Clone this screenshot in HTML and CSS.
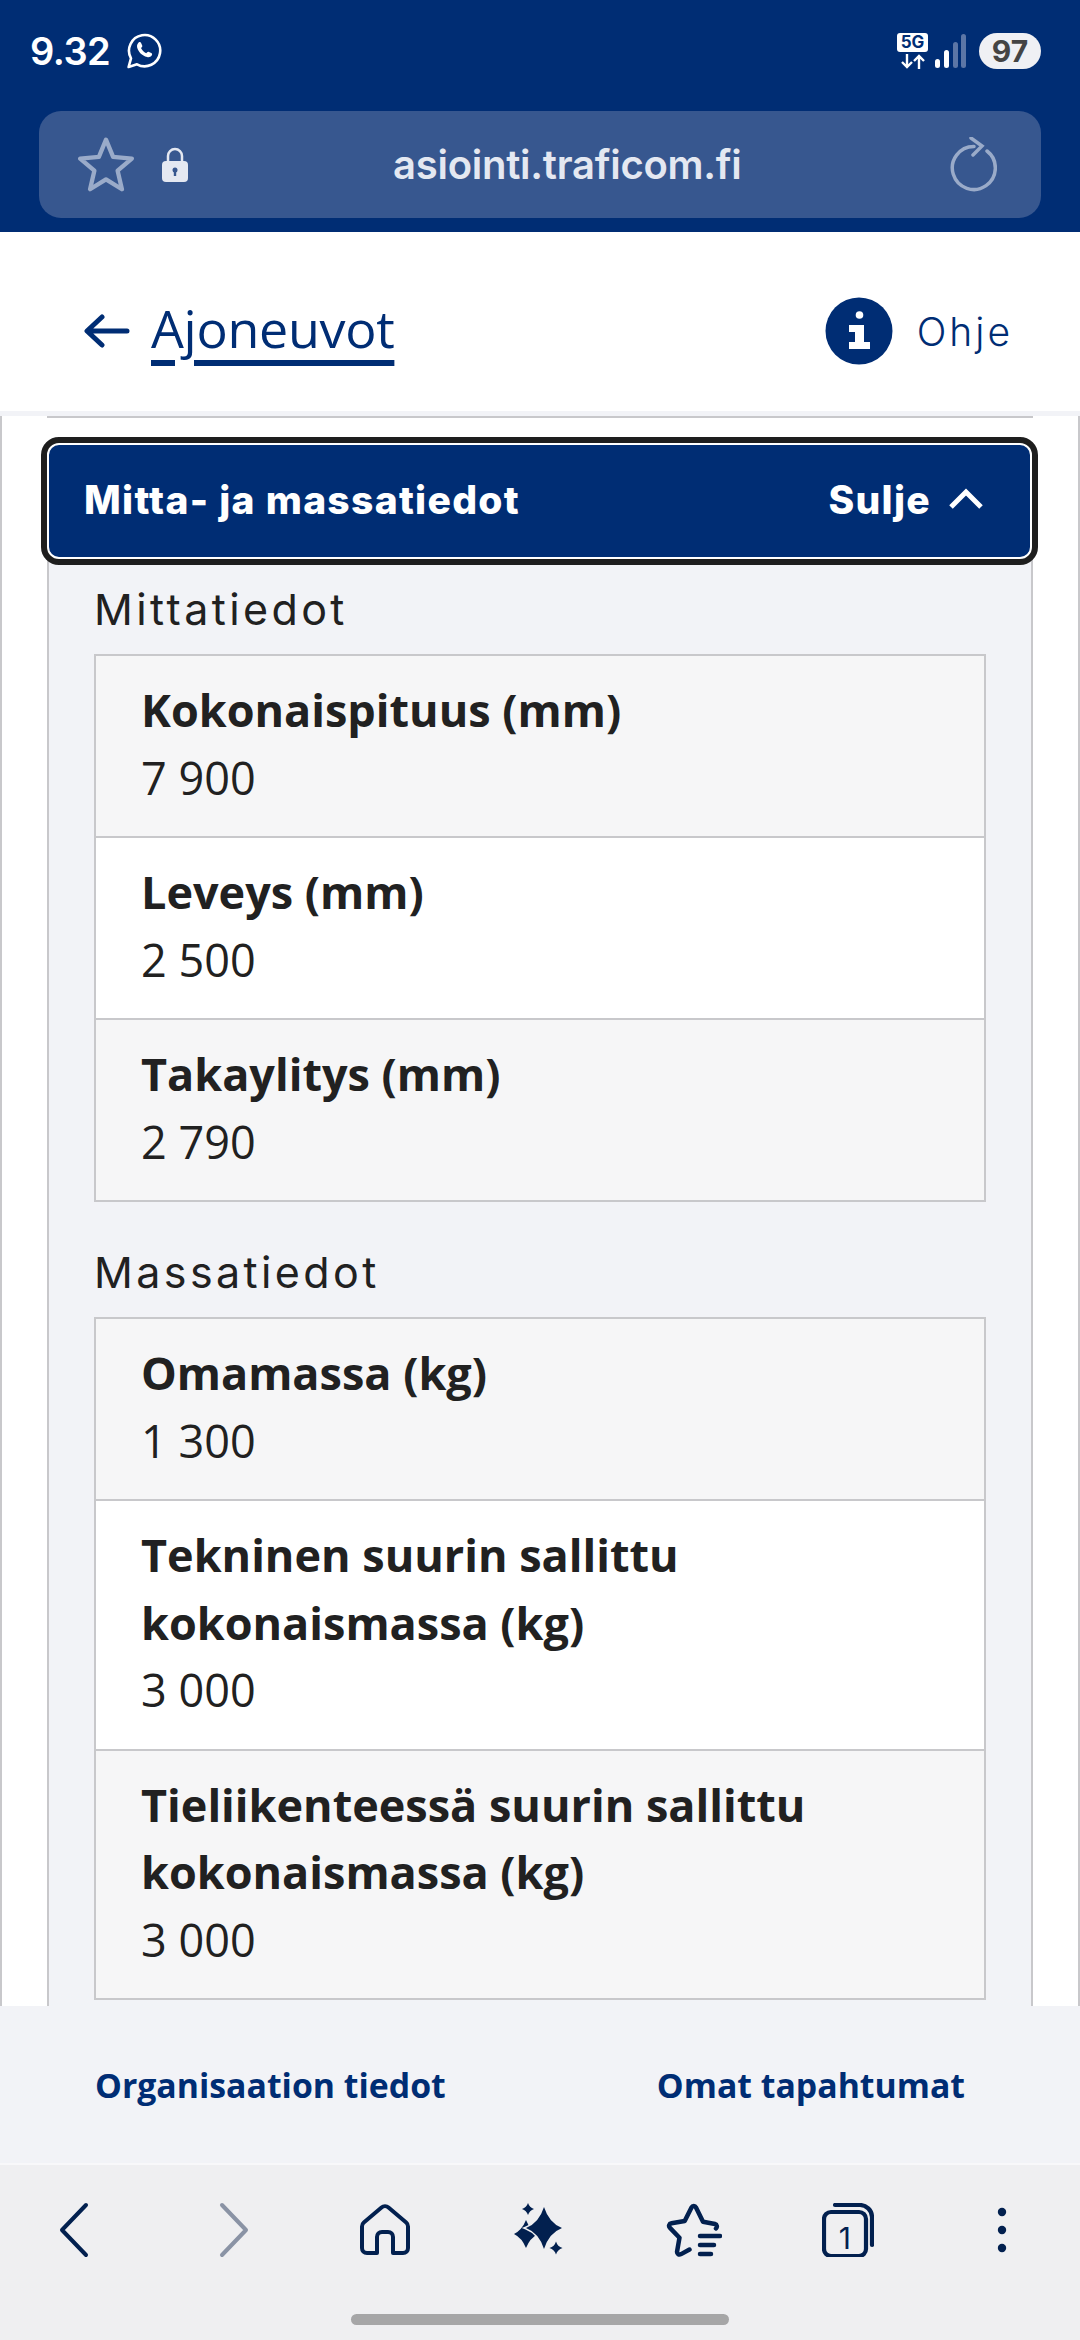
FILE: index.html
```html
<!DOCTYPE html>
<html lang="fi">
<head>
<meta charset="utf-8">
<title>Mitta- ja massatiedot</title>
<link rel="stylesheet" href="styles.css">
</head>
<body>
<div class="screen">
  <header class="browser-top">
    <div class="status">
      <div class="status-left">
        <span class="time">9.32</span>
        <svg class="wa" viewBox="0 0 36 36" width="36" height="36" fill="none" stroke="#fff"><path d="M2.6 34 5 25.3A15.6 15.6 0 1 1 11 31.3Z" stroke-width="2.6" stroke-linejoin="round"/><path d="M12.6 9.6c1-.8 2-.6 2.5.4l1.1 2.4c.3.7.1 1.2-.4 1.8l-.8.9c1 2.2 2.8 4 5.2 5.2l1-1c.6-.6 1.2-.7 1.8-.4l2.3 1.2c.9.5 1.1 1.4.4 2.4-1 1.4-2.8 2-4.6 1.5-5.2-1.4-8.800-5-10-9.800-.4-1.800.5-3.500 1.500-4.600Z" fill="#fff" stroke="none"/></svg>
      </div>
      <div class="status-right">
        <div class="net">
          <span class="net-5g">5G</span>
          <svg viewBox="0 0 26 15" width="26" height="15" fill="none" stroke="#fff" stroke-width="2.400"><path d="M7 0v13M2 8l5 5 5-5M19 15V2M14 7l5-5 5 5"/></svg>
        </div>
        <svg class="signal" viewBox="0 0 31 36" width="31" height="36"><rect x="0" y="26" width="5" height="9" rx="2.500" fill="#fff"/><rect x="9" y="17" width="5" height="18" rx="2.500" fill="#fff"/><rect x="18" y="9" width="5" height="26" rx="2.500" fill="#5c76a6"/><rect x="26" y="1" width="5" height="34" rx="2.500" fill="#5c76a6"/></svg>
        <span class="battery">97</span>
      </div>
    </div>
    <div class="urlbar">
      <svg class="star" viewBox="1 1 52 52" width="56" height="56" fill="none" stroke="#9aabc9" stroke-width="4" stroke-linejoin="round"><path d="M27 3.500 33.600 19.500 51 21 37.800 32.300 41.800 49.500 27 40.400 12.200 49.500 16.200 32.300 3 21 20.400 19.500Z"/></svg>
      <svg class="lock" viewBox="0 0 26 36" width="26" height="36"><path d="M6 15V9a7 7 0 0 1 14 0v6" fill="none" stroke="#e4e8f1" stroke-width="2.500"/><rect x="0" y="14" width="26" height="21" rx="4" fill="#e4e8f1"/><circle cx="13" cy="23" r="2.500" fill="#37578f"/><rect x="11.800" y="23" width="2.400" height="6" fill="#37578f"/></svg>
      <span class="url">asiointi.traficom.fi</span>
      <svg class="reload" viewBox="0 0 48 56" width="48" height="56" fill="none" stroke="#9aabc9" stroke-width="3.500" stroke-linecap="round"><path d="M25 9.500A21.500 21.500 0 1 0 38 14"/><path d="M22 1l11 8-9 9"/></svg>
    </div>
  </header>

  <div class="page-head">
    <a class="back" href="#">
      <svg viewBox="0 0 46 34" width="46" height="34" fill="none" stroke="#002d74" stroke-width="5" stroke-linecap="round" stroke-linejoin="round"><path d="M43 17H4M18 3 3 17l15 14"/></svg>
      <span class="back-text">Ajoneuvot</span>
    </a>
    <a class="help" href="#">
      <svg viewBox="0 0 68 68" width="68" height="68"><circle cx="34" cy="34" r="33.500" fill="#002d74"/><circle cx="34.500" cy="18" r="3.800" fill="#fff"/><path d="M24 28h15v17h6v7H24v-7h6V35h-6Z" fill="#fff"/></svg>
      <span class="help-text">Ohje</span>
    </a>
  </div>

  <main class="content">
    <div class="prev-card"></div>
    <button class="acc-btn" type="button">
      <span class="acc-title">Mitta- ja massatiedot</span>
      <span class="acc-toggle">Sulje
        <svg viewBox="0 0 34 22" width="34" height="22" fill="none" stroke="#fff" stroke-width="5"><path d="M2 19 17 4l15 15"/></svg>
      </span>
    </button>
    <section class="card">
      <h3 class="group-title">Mittatiedot</h3>
      <dl class="table">
        <div class="row odd"><dt>Kokonaispituus (mm)</dt><dd>7 900</dd></div>
        <div class="row"><dt>Leveys (mm)</dt><dd>2 500</dd></div>
        <div class="row odd"><dt>Takaylitys (mm)</dt><dd>2 790</dd></div>
      </dl>
      <h3 class="group-title second">Massatiedot</h3>
      <dl class="table">
        <div class="row odd"><dt>Omamassa (kg)</dt><dd>1 300</dd></div>
        <div class="row"><dt>Tekninen suurin sallittu kokonaismassa (kg)</dt><dd>3 000</dd></div>
        <div class="row odd"><dt>Tieliikenteessä suurin sallittu kokonaismassa (kg)</dt><dd>3 000</dd></div>
      </dl>
    </section>
  </main>

  <footer class="foot">
    <a href="#">Organisaation tiedot</a>
    <a href="#">Omat tapahtumat</a>
  </footer>

  <nav class="nav">
    <div class="nav-icons">
      <span class="ni ni-back"><svg viewBox="0 0 30 56" width="30" height="56" fill="none" stroke="#02204f" stroke-width="4" stroke-linecap="round" stroke-linejoin="round"><path d="M27 3 3 28l24 25"/></svg></span>
      <span class="ni ni-fwd"><svg viewBox="0 0 30 56" width="30" height="56" fill="none" stroke="#8a93a5" stroke-width="4" stroke-linecap="round" stroke-linejoin="round"><path d="M3 3l24 25L3 53"/></svg></span>
      <span class="ni"><svg viewBox="0 0 50 52" width="50" height="52" fill="none" stroke="#02204f" stroke-width="4" stroke-linejoin="round"><path d="M21.500 3.500 3.800 18.500c-1.200 1-1.800 2.400-1.800 4V44c0 3 2 5 5 5h10V33c0-3 2-5 5-5h6c3 0 5 2 5 5v16h10c3 0 5-2 5-5V22.500c0-1.600-.6-3-1.800-4L28.500 3.500c-2-1.700-5-1.700-7 0Z"/></svg></span>
      <span class="ni"><svg viewBox="0 0 50 54" width="50" height="54" fill="#02204f"><path d="M12 17Q16 27 24 31Q16 35 12 45Q8 35 0 31Q8 27 12 17Z"/><path d="M14 0Q15.500 4.500 20 6Q15.500 7.500 14 12Q12.500 7.500 8 6Q12.500 4.500 14 0Z"/><path d="M42 38.500Q43.500 43.500 48.500 45Q43.500 46.500 42 51.500Q40.500 46.500 35.500 45Q40.500 43.500 42 38.500Z"/><path d="M30 4Q35 20 48 25Q35 30 30 46Q25 30 12 25Q25 20 30 4Z" stroke="#efeff1" stroke-width="3" paint-order="stroke"/></svg></span>
      <span class="ni"><svg viewBox="0 0 56 54" width="56" height="54" fill="none" stroke="#02204f" stroke-width="4.500" stroke-linecap="round" stroke-linejoin="round"><path d="M50 25.500c1.500-1.500 1-4-1-4.500l-12-2.300L30 4.500c-1-2-3.500-2-4.500 0L18.700 18 5.500 20.200c-2.500.4-3.200 3-1.500 4.700l9.500 9.800-2.400 13.600c-.4 2.500 1.800 3.900 4 2.800l8.400-4.600"/><path d="M34 33h20M34 42h14M34 51h11"/></svg></span>
      <span class="ni tabs"><svg viewBox="0 0 52 54" width="52" height="54" fill="none" stroke="#02204f" stroke-width="4.200" stroke-linecap="round"><rect x="2" y="9" width="42" height="44" rx="7"/><path d="M13 2h25c6 0 12 5 12 12v28"/></svg><span class="tab-count">1</span></span>
      <span class="ni"><svg viewBox="0 0 10 46" width="10" height="46" fill="#02204f"><circle cx="5" cy="5" r="4.200"/><circle cx="5" cy="23" r="4.200"/><circle cx="5" cy="41" r="4.200"/></svg></span>
    </div>
    <div class="home-indicator"></div>
  </nav>
</div>
</body>
</html>
```
FILE: styles.css
```css
* { box-sizing: border-box; }
html, body { margin: 0; padding: 0; }
body { width: 1080px; height: 2340px; overflow: hidden; background: #fff; font-family: "Open Sans", "Noto Sans", sans-serif; color: #212121; }
a { color: inherit; text-decoration: none; }
.screen { width: 1080px; height: 2340px; display: flex; flex-direction: column; }

.browser-top { height: 232px; background: #002d74; padding: 0 39px 14px; flex: none; display: flex; flex-direction: column; }
.status { height: 111px; display: flex; justify-content: space-between; align-items: flex-start; margin-left: -9px; }
.status-left { display: flex; align-items: center; gap: 16px; padding-top: 32px; }
.time { font-family: Inter, sans-serif; font-weight: 600; font-size: 38px; line-height: 38px; color: #fff; letter-spacing: -0.5px; }
.status-right { display: flex; align-items: center; padding-top: 33px; }
.net { display: flex; flex-direction: column; align-items: center; gap: 2px; width: 31px; margin-right: 7px; }
.net-5g { display: block; width: 31px; height: 19px; background: #fff; color: #002d74; border-radius: 3px; font: 700 17px/19px Inter, sans-serif; text-align: center; }
.signal { margin-right: 13px; }
.battery { width: 62px; height: 36px; border-radius: 18px; background: #eff0f4; color: #444; font: 700 30px/36px Inter, sans-serif; text-align: center; }

.urlbar { flex: 1; border-radius: 22px; background: #37578f; display: flex; align-items: center; padding: 0 27px 0 39px; }
.lock { margin-left: 28px; }
.url { margin-left: 205px; font-family: Inter, sans-serif; font-weight: 600; font-size: 40px; color: #e4e8f1; letter-spacing: -0.25px; }
.reload { margin-left: auto; margin-right: 17px; }

.page-head { height: 184px; flex: none; background: #fff; border-bottom: 5px solid #f2f3f7; display: flex; align-items: center; justify-content: space-between; padding: 18px 67px 0 84px; }
.back { display: flex; align-items: center; gap: 21px; color: #002d74; }
.back-text { font-size: 52px; font-weight: 400; line-height: 60px; padding-bottom: 6px; text-decoration: underline; text-decoration-thickness: 6px; text-underline-offset: 12px; text-decoration-skip-ink: auto; letter-spacing: -0.3px; }
.help { display: flex; align-items: center; gap: 24px; color: #002d74; }
.help-text { font-family: Inter, sans-serif; font-weight: 300; font-size: 39px; letter-spacing: 3px; padding-top: 2px; }

.content { flex: 1; min-height: 0; overflow: hidden; border-left: 2px solid #c8c8cb; border-right: 2px solid #c8c8cb; padding: 0 39px; }
.prev-card { height: 2px; margin: 0 6px; background: #c8c8cb; }
.acc-btn { display: flex; width: 985px; height: 116px; margin: 25px 0 0 6px; position: relative; z-index: 1; align-items: center; justify-content: space-between; padding: 0 47px 4px 35px; background: #002d74; border: 2px solid #fff; border-radius: 12px; outline: 6px solid #1e1e1e; color: #fff; font-family: Inter, sans-serif; font-weight: 800; font-size: 39px; letter-spacing: 1.300px; }
.acc-toggle { display: flex; align-items: center; gap: 18px; }
.card { margin: 0 6px; border: 2px solid #c8c8cb; border-top: 0; background: #f2f3f7; padding: 6px 45px 120px; }
.group-title { margin: 0; font-family: Inter, sans-serif; font-weight: 400; font-size: 43px; line-height: 89px; letter-spacing: 3.400px; color: #212121; }
.group-title.second { margin-top: 26px; }
.table { margin: 0; border: 2px solid #c8c8cb; }
.row { padding: 20px 45px 25px; background: #fff; border-bottom: 2px solid #c8c8cb; }
.row:last-child { border-bottom: 0; }
.row.odd { background: #f6f6f7; }
.row dt { font-weight: 700; font-size: 45px; line-height: 67.500px; }
.row dd { margin: 0; font-size: 45px; line-height: 67.500px; font-weight: 400; }

.foot { height: 159px; flex: none; background: #f2f3f7; display: flex; align-items: center; padding: 0 115px 0 95px; justify-content: space-between; color: #002d74; font-weight: 700; font-size: 33.800px; border-bottom: 2px solid #f8f8fa; }
.nav { height: 175px; flex: none; background: #efeff1; display: flex; flex-direction: column; }
.nav-icons { display: flex; height: 149px; align-items: center; padding: 0 1px 20px 0; }
.ni { flex: 1; display: flex; justify-content: center; position: relative; }
.ni-back svg { margin-right: 6px; }
.ni-fwd svg { margin-left: 6px; }
.tabs .tab-count { position: absolute; left: 0; right: 0; top: 17px; text-align: center; padding-right: 6px; font: 400 30px/36px Inter, sans-serif; color: #02204f; }
.home-indicator { width: 378px; height: 11px; border-radius: 6px; background: #a6a6a7; align-self: center; }
```
